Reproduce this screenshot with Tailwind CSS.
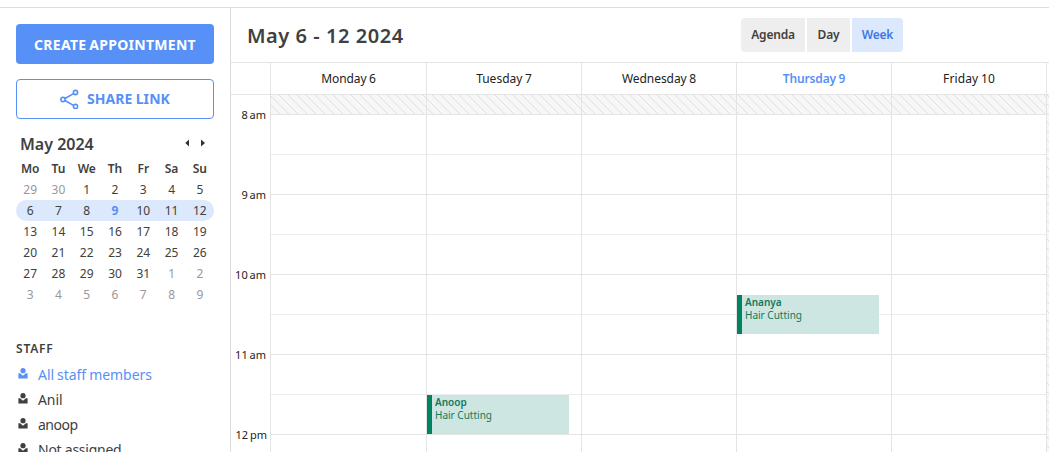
<!DOCTYPE html>
<html lang="en">
<head>
<meta charset="utf-8">
<title>Calendar</title>
<script src="https://cdn.jsdelivr.net/npm/@tailwindcss/browser@4"></script>
</head>
<body class="h-[452px] overflow-hidden bg-white pt-[7px] font-['Noto_Sans',sans-serif] text-[#404040]">
<svg class="hidden"><symbol id="person" viewBox="0 0 10 11"><circle cx="5" cy="2.7" r="2.6"/><path d="M.4 5.2h1.700L5 7.700l2.900-2.500h1.700v5.300H.4z"/></symbol></svg>
<div class="flex h-[445px] border-t border-[#dedede]">
  <aside class="flex w-[231px] shrink-0 flex-col overflow-hidden border-r border-[#dcdcdc] px-4 pt-4">
    <button class="flex h-10 shrink-0 items-center justify-center rounded bg-[#5790f7] text-[14px] font-bold tracking-[0.28px] text-white [word-spacing:-1px]">CREATE APPOINTMENT</button>
    <button class="mt-[15px] flex h-10 shrink-0 items-center justify-center gap-2 rounded border border-[#5790f7] pb-px text-[14px] font-bold text-[#5790f7]">
      <svg class="h-5 w-[19px]" viewBox="0 0 19 20" fill="none" stroke="#5790f7" stroke-width="1.6"><circle cx="3" cy="10.500" r="2.100"/><circle cx="15.500" cy="3.500" r="2.100"/><circle cx="15.500" cy="17.500" r="2.100"/><path d="M5 9.500l8.500-4.900M5 11.500l8.500 4.900"/></svg>
      <span class="tracking-[0.07px] [word-spacing:-.500px]">SHARE LINK</span>
    </button>
    <div class="mt-[13px] flex h-6 shrink-0 items-center justify-between pr-2 pl-1">
      <h2 class="text-[16px] leading-6 font-semibold">May 2024</h2>
      <div class="flex items-center gap-[11px] pb-[2px]">
        <svg class="h-2 w-[5px]" viewBox="0 0 5 8" fill="#333"><path d="M4 .500v7L.3 4z"/></svg>
        <svg class="h-2 w-[5px]" viewBox="0 0 5 8" fill="#333"><path d="M0 .500v7l4-3.500z"/></svg>
      </div>
    </div>
    <div class="mt-[2px] grid shrink-0 grid-cols-7 text-center text-[12px] leading-[21px] font-semibold tracking-[-0.1px]"><span>Mo</span><span>Tu</span><span>We</span><span>Th</span><span>Fr</span><span>Sa</span><span>Su</span></div>
    <div class="grid shrink-0 grid-cols-7 text-center text-[12px] leading-[21px]">
      <span class="text-[#999]">29</span><span class="text-[#999]">30</span><span>1</span><span>2</span><span>3</span><span>4</span><span>5</span>
      <div class="col-span-7 grid grid-cols-7 rounded-full bg-[#dce8fc]"><span>6</span><span>7</span><span>8</span><span class="font-bold text-[#5790f7]">9</span><span>10</span><span>11</span><span>12</span></div>
      <span>13</span><span>14</span><span>15</span><span>16</span><span>17</span><span>18</span><span>19</span>
      <span>20</span><span>21</span><span>22</span><span>23</span><span>24</span><span>25</span><span>26</span>
      <span>27</span><span>28</span><span>29</span><span>30</span><span>31</span><span class="text-[#999]">1</span><span class="text-[#999]">2</span>
      <span class="text-[#999]">3</span><span class="text-[#999]">4</span><span class="text-[#999]">5</span><span class="text-[#999]">6</span><span class="text-[#999]">7</span><span class="text-[#999]">8</span><span class="text-[#999]">9</span>
    </div>
    <h3 class="mt-[34px] shrink-0 text-[12px] leading-5 font-semibold tracking-[0.8px]">STAFF</h3>
    <ul class="mt-[3px] text-[14px] leading-[25px]">
      <li class="flex items-center gap-[10px] pl-[2px] text-[#5790f7]"><svg class="mb-[2px] h-[11px] w-[10px] fill-current"><use href="#person"/></svg><span class="tracking-[-0.05px] [word-spacing:-.500px]">All staff members</span></li>
      <li class="flex items-center gap-[10px] pl-[2px]"><svg class="mb-[2px] h-[11px] w-[10px] fill-current"><use href="#person"/></svg><span class="tracking-[-0.1px]">Anil</span></li>
      <li class="flex items-center gap-[10px] pl-[2px]"><svg class="mb-[2px] h-[11px] w-[10px] fill-current"><use href="#person"/></svg><span class="tracking-[-0.5px]">anoop</span></li>
      <li class="flex items-center gap-[10px] pl-[2px]"><svg class="mb-[2px] h-[11px] w-[10px] fill-current"><use href="#person"/></svg><span class="tracking-[-0.25px]">Not assigned</span></li>
    </ul>
  </aside>
  <main class="flex min-w-0 flex-1 flex-col">
    <header class="flex h-[54px] shrink-0 items-center justify-between pr-[146px] pl-4">
      <h1 class="pt-[2px] text-[20px] font-semibold tracking-[0.54px]">May 6 - 12 2024</h1>
      <div class="flex h-[34px] gap-[2px] text-[12px] font-semibold">
        <button class="w-16 rounded-l bg-[#eee] tracking-[-0.2px]">Agenda</button><button class="w-[43px] bg-[#eee] tracking-[-0.1px]">Day</button><button class="w-[51px] rounded-r bg-[#dce8fc] tracking-[-0.25px] text-[#3f77e4]">Week</button>
      </div>
    </header>
    <div class="grid h-[33px] shrink-0 grid-cols-[39px_156px_155px_155px_155px_155px_3px] border-y border-[#e4e4e4] text-center text-[12px] leading-[31px] text-[#222] [word-spacing:-.500px]">
      <span></span><span class="border-l border-[#e4e4e4] tracking-[-0.1px]">Monday 6</span><span class="border-l border-[#e4e4e4]">Tuesday 7</span><span class="border-l border-[#e4e4e4] tracking-[-0.05px]">Wednesday 8</span><span class="border-l border-[#e4e4e4] font-semibold tracking-[-0.15px] text-[#5790f7]">Thursday 9</span><span class="border-l border-[#e4e4e4] tracking-[0.1px]">Friday 10</span><span class="border-l border-[#e4e4e4]"></span>
    </div>
    <div class="flex min-h-0 flex-1 overflow-hidden">
      <div class="flex w-[39px] shrink-0 flex-col pt-[10px] pr-[4px] text-right text-[11px] leading-5 whitespace-nowrap text-[#222] [word-spacing:-1px]">
        <span class="h-20 shrink-0">8 am</span><span class="h-20 shrink-0">9 am</span><span class="h-20 shrink-0">10 am</span><span class="h-20 shrink-0">11 am</span><span class="-mr-px h-20 shrink-0">12 pm</span>
      </div>
      <div class="relative flex-1">
        <div class="h-5 border-b border-[#e4e4e4] bg-[#f7f7f7]"><svg class="h-[19px] w-full"><defs><pattern id="hatch" width="9" height="9" patternUnits="userSpaceOnUse"><path d="M-1-1l11 11M-1 8l2 2M8-1l2 2" stroke="#dadada" stroke-width=".8"/></pattern></defs><rect width="100%" height="100%" fill="url(#hatch)"/></svg></div>
        <div class="h-10 border-b border-[#ececec]"></div><div class="h-10 border-b border-[#e4e4e4]"></div>
        <div class="h-10 border-b border-[#ececec]"></div><div class="h-10 border-b border-[#e4e4e4]"></div>
        <div class="h-10 border-b border-[#ececec]"></div><div class="h-10 border-b border-[#e4e4e4]"></div>
        <div class="h-10 border-b border-[#ececec]"></div><div class="h-10 border-b border-[#e4e4e4]"></div>
        <div class="absolute inset-0 grid grid-cols-[156px_155px_155px_155px_155px_3px]">
          <div class="border-l border-[#e4e4e4]"></div>
          <div class="relative border-l border-[#e4e4e4]">
            <div class="absolute top-[300px] left-0 h-[39px] w-[142px] border-l-[5px] border-[#00845f] bg-[#cde6e1] pt-px pl-[3px] text-[10px] leading-[13px] text-[#13795c]"><p class="font-semibold">Anoop</p><p>Hair Cutting</p></div>
          </div>
          <div class="border-l border-[#e4e4e4]"></div>
          <div class="relative border-l border-[#e4e4e4]">
            <div class="absolute top-[200px] left-0 h-[39px] w-[142px] border-l-[5px] border-[#00845f] bg-[#cde6e1] pt-px pl-[3px] text-[10px] leading-[13px] text-[#13795c]"><p class="font-semibold">Ananya</p><p>Hair Cutting</p></div>
          </div>
          <div class="border-l border-[#e4e4e4]"></div>
          <div class="border-l border-[#e4e4e4] bg-[#f7f7f7]"><svg class="h-full w-full"><rect width="100%" height="100%" fill="url(#hatch)"/></svg></div>
        </div>
      </div>
    </div>
  </main>
</div>
</body>
</html>
